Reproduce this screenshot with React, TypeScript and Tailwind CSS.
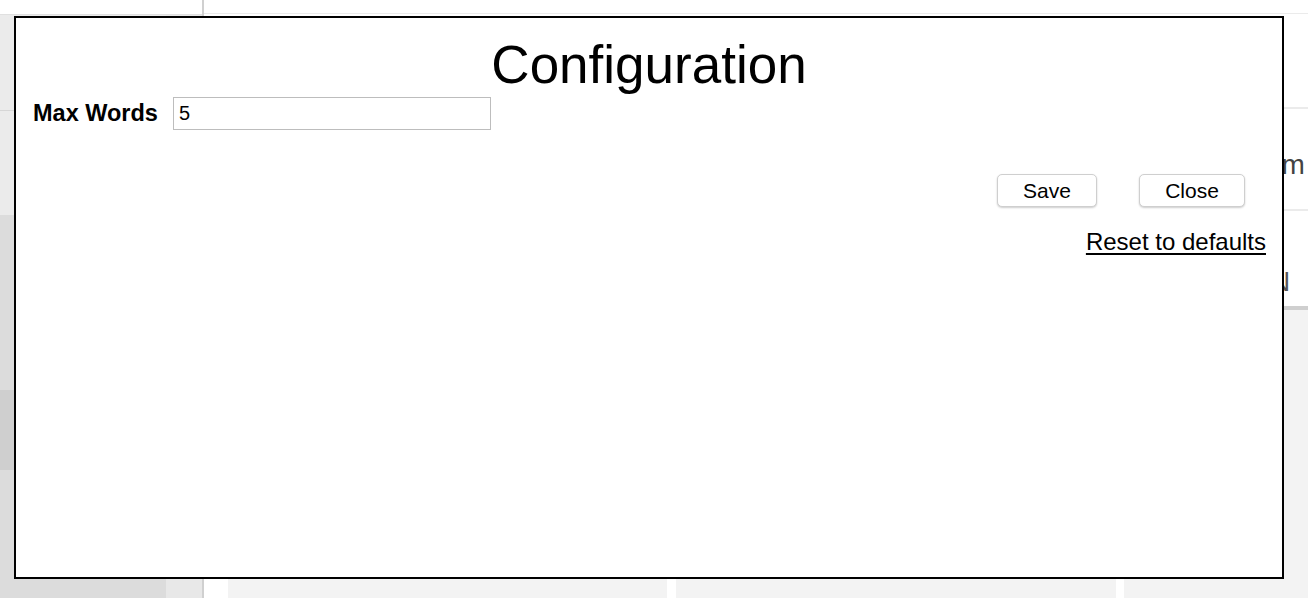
export default function App() {
  return (
    <div
      className="relative w-[1308px] h-[598px] overflow-hidden bg-white"
      style={{ fontFamily: '"Liberation Sans", Arial, sans-serif' }}
    >
      {/* Page behind the dialog */}
      <div className="flex h-full">
        {/* Sidebar */}
        <div className="flex flex-col w-[204px] shrink-0 border-r-2 border-[#d0d0d0]">
          <div className="h-[15px] border-b border-[#e0e0e0] bg-white" />
          <div className="flex flex-1">
            <div className="flex flex-col w-[166px]">
              <div className="h-[96px] bg-[#ebebeb] border-b border-[#d6d6d6]" />
              <div className="h-[104px] bg-[#ebebeb]" />
              <div className="h-[175px] bg-[#dcdcdc]" />
              <div className="h-[80px] bg-[#cfcfcf]" />
              <div className="flex-1 bg-[#dcdcdc]" />
            </div>
            <div className="flex-1 bg-[#e8e8e8]" />
          </div>
        </div>

        {/* Main */}
        <div className="flex flex-col flex-1">
          <div className="h-[14px] shrink-0 border-b border-[#ebebeb]" />
          <div className="h-[95px] shrink-0 border-b-2 border-[#ebebeb]" />
          <div className="h-[102px] shrink-0 border-b-2 border-[#ebebeb] flex items-start pt-[35px] pl-[1062px] text-[28px] text-[#444] whitespace-nowrap">
            em
          </div>
          <div className="h-[99px] shrink-0 border-b-4 border-[#cfcfcf] flex items-start pt-[50px] pl-[1066px] text-[28px] text-[#555]">
            N
          </div>
          <div className="flex flex-1 gap-[9px] pl-[24px]">
            <div className="w-[439px] bg-[#f3f3f3]" />
            <div className="w-[440px] bg-[#f3f3f3]" />
            <div className="flex-1 ml-[-1px] bg-[#f3f3f3]" />
          </div>
        </div>
      </div>

      {/* Configuration dialog */}
      <div className="absolute left-[14px] top-[16px] w-[1270px] h-[563px] border-2 border-black bg-white text-black">
        <h1 className="pt-[20px] text-center text-[53px] leading-none">Configuration</h1>
        <div className="flex items-center mt-[5px] pl-[17px]">
          <label className="text-[23.5px] font-bold mr-[15px]">Max Words</label>
          <input
            defaultValue="5"
            className="w-[318px] h-[33px] border border-[#bdbdbd] px-[5px] text-[20px] outline-none"
          />
        </div>
        <div className="flex justify-end gap-[42px] mt-[43px] pr-[37px]">
          <button className="w-[100px] h-[33px] bg-white border border-[#cfcfcf] rounded-[5px] shadow-[0_1px_2px_rgba(0,0,0,0.2)] text-[21px]">
            Save
          </button>
          <button className="w-[106px] h-[33px] bg-white border border-[#cfcfcf] rounded-[5px] shadow-[0_1px_2px_rgba(0,0,0,0.2)] text-[21px]">
            Close
          </button>
        </div>
        <div className="flex justify-end pr-[16px] mt-[17px]">
          <a className="text-[24px] underline underline-offset-[3px] cursor-pointer">Reset to defaults</a>
        </div>
      </div>
    </div>
  )
}
